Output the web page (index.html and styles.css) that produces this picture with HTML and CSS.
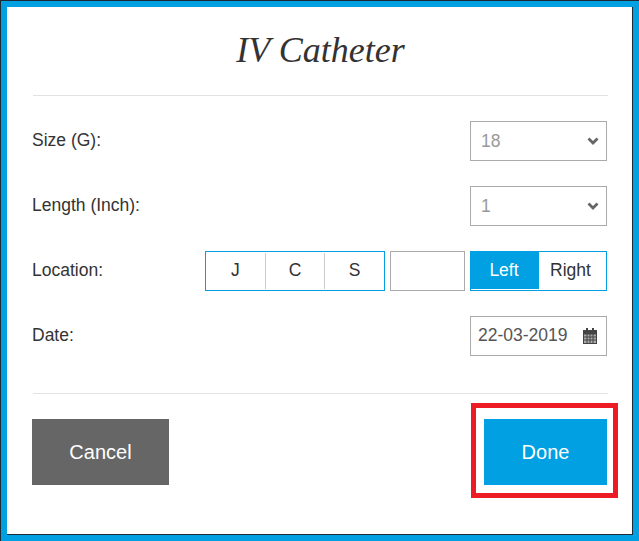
FILE: index.html
```html
<!DOCTYPE html>
<html>
<head>
  <meta charset="UTF-8">
  <meta name="viewport" content="width=device-width, initial-scale=1.0">
  <title>IV Catheter</title>
  <link rel="stylesheet" href="styles.css">
</head>
<body>
  <div class="frame">
    <div class="modal">
      <h1 class="title">IV Catheter</h1>

      <div class="form">
        <div class="row">
          <label class="label">Size (G):</label>
          <div class="select">
            <select class="field muted"><option>18</option></select>
            <svg class="chevron" width="14" height="10" viewBox="0 0 14 10"><path d="M2.500 2.500L7 7l4.500-4.500" fill="none" stroke="#666" stroke-width="2.800"/></svg>
          </div>
        </div>

        <div class="row">
          <label class="label">Length (Inch):</label>
          <div class="select">
            <select class="field muted"><option>1</option></select>
            <svg class="chevron" width="14" height="10" viewBox="0 0 14 10"><path d="M2.500 2.500L7 7l4.500-4.500" fill="none" stroke="#666" stroke-width="2.800"/></svg>
          </div>
        </div>

        <div class="row">
          <label class="label">Location:</label>
          <div class="controls">
            <div class="group letters">
              <button class="seg">J</button>
              <button class="seg">C</button>
              <button class="seg">S</button>
            </div>
            <input class="blank" type="text">
            <div class="group sides">
              <button class="side active">Left</button>
              <button class="side">Right</button>
            </div>
          </div>
        </div>

        <div class="row">
          <label class="label">Date:</label>
          <div class="date">
            <span class="date-text">22-03-2019</span>
            <svg class="cal" width="14" height="16" viewBox="0 0 14 16">
              <path d="M0 2h3V0h2v2h4V0h2v2h3v14H0z" fill="#444"/>
              <path d="M1 6.500h2.500V8.500H1zM4.500 6.500h2V8.500h-2zM7.500 6.500h2V8.500h-2zM10.500 6.500H13V8.500h-2.500zM1 9.500h2.500V11.500H1zM4.500 9.500h2V11.500h-2zM7.500 9.500h2V11.500h-2zM10.500 9.500H13V11.500h-2.500zM1 12.500h2.500V15H1zM4.500 12.500h2V15h-2zM7.500 12.500h2V15h-2zM10.500 12.500H13V15h-2.500z" fill="#aaa"/>
            </svg>
          </div>
        </div>
      </div>

      <div class="rule"></div>

      <div class="footer">
        <button class="btn cancel">Cancel</button>
        <button class="btn done">Done</button>
        <div class="highlight"></div>
      </div>
    </div>
  </div>
</body>
</html>
```

FILE: styles.css
```css
* {
  padding: 0;
  margin: 0;
  box-sizing: border-box;
}
body {
  font-family: "Liberation Sans", Arial, sans-serif;
  font-size: 17.5px;
  color: #333;
  background: #00a0e3;
}
.frame {
  width: 639px;
  height: 541px;
  padding: 6px;
  border-top: 1px solid #1d2b36;
  border-left: 1px solid #1d2b36;
  background: #00a0e3;
}
.modal {
  height: 100%;
  padding: 0 25px;
  border-right: 1px solid #1d2b36;
  border-bottom: 1px solid #1d2b36;
  background: white;
}
.title {
  height: 89px;
  margin: 0 -1px 0 1px;
  padding-top: 22px;
  border-bottom: 1px solid #e2e2e2;
  text-align: center;
  font-family: "Liberation Serif", Georgia, serif;
  font-size: 36px;
  font-style: italic;
  font-weight: normal;
  line-height: 42px;
}
.form {
  padding-top: 25px;
}
.row {
  display: flex;
  justify-content: space-between;
  align-items: center;
  height: 40px;
  margin-bottom: 25px;
}
.label {
  padding-bottom: 2px;
}
.select {
  position: relative;
  width: 137px;
  height: 40px;
}
.field {
  width: 100%;
  height: 100%;
  border: 1px solid #aaa;
  border-radius: 0;
  background: white;
  padding: 0 10px;
  font: inherit;
  appearance: none;
}
.muted {
  color: #999;
}
.chevron {
  position: absolute;
  top: 15px;
  right: 7px;
  pointer-events: none;
}
.controls {
  display: flex;
  gap: 5px;
}
.group {
  display: flex;
  height: 40px;
  border: 1px solid #00a0e3;
}
.letters {
  width: 180px;
  padding: 1px 0;
}
.seg {
  flex: 1;
  padding-bottom: 2px;
  border: 0;
  border-right: 1px solid #ccc;
  background: white;
  font: inherit;
  color: #333;
}
.seg:last-child {
  border-right: 0;
}
.blank {
  width: 75px;
  height: 40px;
  border: 1px solid #aaa;
  border-radius: 0;
}
.sides {
  width: 137px;
  padding-bottom: 1px;
}
.side {
  width: 67px;
  padding: 0 4px 0 0;
  border: 0;
  background: white;
  font: inherit;
  color: #333;
}
.active {
  width: 68px;
  padding: 0 2px 0 0;
  background: #00a0e3;
  color: white;
}
.date {
  display: flex;
  justify-content: space-between;
  align-items: center;
  width: 137px;
  height: 40px;
  padding: 0 9px 0 7px;
  border: 1px solid #aaa;
  color: #555;
}
.date-text {
  padding-bottom: 2px;
}
.cal {
  margin-top: -1px;
}
.rule {
  height: 1px;
  margin: 37px -1px 0 1px;
  background: #e2e2e2;
}
.footer {
  position: relative;
  display: flex;
  justify-content: space-between;
  padding-top: 25px;
}
.btn {
  height: 66px;
  border: 0;
  font: inherit;
  font-size: 20px;
  color: white;
}
.cancel {
  width: 137px;
  background: #666;
}
.done {
  width: 123px;
  background: #00a0e3;
}
.highlight {
  position: absolute;
  top: 9px;
  right: -11px;
  width: 147px;
  height: 95px;
  border: 5px solid #ed1c24;
}
```
